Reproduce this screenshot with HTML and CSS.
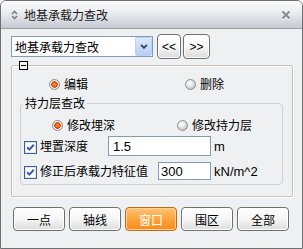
FILE: index.html
```html
<!DOCTYPE html>
<html lang="zh-CN">
<head>
<meta charset="utf-8">
<title>地基承载力查改</title>
<link rel="stylesheet" href="styles.css">
</head>
<body>
<div class="window">
  <div class="titlebar">
    <svg class="ticon" viewBox="0 0 7 10" width="7" height="10"><path d="M1 4 L3.5 1.5 L6 4" fill="none" stroke="#7a7d82" stroke-width="1.6"/><path d="M1 6 L3.5 8.5 L6 6" fill="none" stroke="#7a7d82" stroke-width="1.6"/></svg>
    <span class="title">地基承载力查改</span>
    <svg class="close" viewBox="0 0 10 10" width="10" height="10"><path d="M1.5 2.5 L8.5 9.5 M8.5 2.5 L1.5 9.5" stroke="#ffffff" stroke-width="2.2"/><path d="M1.5 1.5 L8.5 8.5 M8.5 1.5 L1.5 8.5" stroke="#8b8d91" stroke-width="2.2"/></svg>
  </div>
  <div class="content">
    <div class="toprow">
      <div class="select">
        <span class="seltext">地基承载力查改</span>
        <span class="arrow"><svg viewBox="0 0 8 5" width="8" height="5"><path d="M1 0.8 L4 3.8 L7 0.8" fill="none" stroke="#2c3e62" stroke-width="1.8"/></svg></span>
      </div>
      <button class="btn prev">&lt;&lt;</button>
      <button class="btn next">&gt;&gt;</button>
    </div>
    <fieldset class="group">
      <legend class="collapse"><span class="minus"></span></legend>
      <div class="radiorow">
        <label class="radio on first"><i></i>编辑</label>
        <label class="radio"><i></i>删除</label>
      </div>
      <fieldset class="sub">
        <legend class="sublegend">持力层查改</legend>
        <div class="radiorow2">
          <label class="radio on first"><i></i>修改埋深</label>
          <label class="radio"><i></i>修改持力层</label>
        </div>
        <div class="checkrow row1">
          <svg class="check" viewBox="0 0 13 13" width="13" height="13"><rect x="0.5" y="0.5" width="12" height="12" fill="#ffffff" stroke="#3d5f95"/><rect x="1.5" y="1.5" width="10" height="10" fill="none" stroke="#dfe6f2"/><path d="M3.2 6.2 L5.4 8.6 L9.8 3.8" fill="none" stroke="#3c58b4" stroke-width="2"/></svg>
          <span class="clabel">埋置深度</span>
          <input class="inp wide" type="text" value="1.5">
          <span class="unit">m</span>
        </div>
        <div class="checkrow row2">
          <svg class="check" viewBox="0 0 13 13" width="13" height="13"><rect x="0.5" y="0.5" width="12" height="12" fill="#ffffff" stroke="#3d5f95"/><rect x="1.5" y="1.5" width="10" height="10" fill="none" stroke="#dfe6f2"/><path d="M3.2 6.2 L5.4 8.6 L9.8 3.8" fill="none" stroke="#3c58b4" stroke-width="2"/></svg>
          <span class="clabel">修正后承载力特征值</span>
          <input class="inp narrow" type="text" value="300">
          <span class="unit">kN/m^2</span>
        </div>
      </fieldset>
    </fieldset>
    <div class="buttons">
      <button class="btn big">一点</button>
      <button class="btn big">轴线</button>
      <button class="btn big active">窗口</button>
      <button class="btn big">围区</button>
      <button class="btn big">全部</button>
    </div>
  </div>
</div>
</body>
</html>
```
FILE: styles.css
```css
* { box-sizing: border-box; }
html, body { margin: 0; padding: 0; }
body {
  width: 303px;
  height: 249px;
  overflow: hidden;
  background: #ffffff;
  font-family: "Noto Sans CJK SC", "Liberation Sans", sans-serif;
  font-size: 12px;
  color: #000;
}
.window {
  width: 303px;
  height: 249px;
  border: 1px solid #6d6f73;
  border-radius: 6px 6px 0 0;
  background: #eff0f2;
  overflow: hidden;
  display: flex;
  flex-direction: column;
}
.titlebar {
  flex: none;
  height: 28px;
  display: flex;
  align-items: center;
  padding-left: 10px;
  background: linear-gradient(#fbfbfc, #eceef1 40%, #c6cad1);
  border-bottom: 1px solid #9a9ea5;
}
.ticon { flex: none; margin-right: 6px; }
.title { flex: 1; font-size: 12px; line-height: 14px; color: #1b1b1b; }
.close { flex: none; margin-right: 11px; margin-top: 1px; }

.content { flex: 1; padding: 5px 9px 0 10px; }

.toprow {
  display: flex;
  align-items: center;
  height: 25px;
}
.select {
  width: 142px;
  height: 21px;
  border: 1px solid #7f9db9;
  background: #ffffff;
  display: flex;
  align-items: stretch;
  padding-left: 3px;
  margin-right: 4px;
}
.seltext { flex: 1; line-height: 19px; }
.arrow {
  width: 17px;
  border: 1px solid #bcd1f0;
  border-radius: 2px;
  background: linear-gradient(#dbe8fc, #b5cff5);
  display: flex;
  align-items: center;
  justify-content: center;
}
.arrow svg { display: block; }

.btn {
  font-family: "Liberation Sans", "Noto Sans CJK SC", sans-serif;
  font-size: 12px;
  color: #000;
  height: 25px;
  padding: 0;
  border: 1px solid #6f7072;
  border-radius: 4px;
  background: linear-gradient(#ffffff, #f6f6f6 50%, #dcdcdc);
  box-shadow: inset 0 0 0 1px #ffffff;
}
.prev { width: 24px; margin-right: 2px; }
.next { width: 27px; }

.group {
  margin: 2px 0 0 0;
  padding: 0;
  min-width: 0;
  border: 1px solid #c6c3b3;
  border-radius: 2px;
  box-shadow: 1px 1px 0 #ffffff, inset 1px 1px 0 #ffffff;
}
.collapse {
  padding: 0;
  margin-left: 7px;
  height: 9px;
}
.minus {
  display: block;
  width: 9px;
  height: 9px;
  border: 1px solid #000;
  background: linear-gradient(#000, #000) center / 5px 1px no-repeat, #f6f6f6;
}

.radiorow {
  display: flex;
  align-items: center;
  height: 18px;
  margin-top: 5px;
  padding-left: 37px;
}
.radio {
  display: flex;
  align-items: center;
  gap: 4px;
  line-height: 14px;
}
.radiorow .first { width: 136px; }
.radio i {
  display: block;
  width: 11px;
  height: 11px;
  border-radius: 50%;
  border: 1px solid #8e8e8e;
  background: radial-gradient(circle at 40% 35%, #ffffff 0, #ececec 35%, #a9a9a9 100%);
}
.radio.on i {
  background: radial-gradient(circle at 50% 50%, #ff9a50 0, #f0641a 1.8px, #d24a06 3px, #f2f2f2 3.6px, #d0d0d0 100%);
}

.sub {
  margin: 3px 9px 11px 8px;
  padding: 0 0 3px 0;
  min-width: 0;
  border: 1px solid #cfd0d3;
  border-radius: 4px;
}
.sublegend {
  padding: 0 2px;
  margin-left: 2px;
  line-height: 14px;
}
.radiorow2 {
  display: flex;
  align-items: center;
  height: 18px;
  margin-top: 6px;
  padding-left: 31px;
}
.radiorow2 .first { width: 125px; }

.checkrow {
  display: flex;
  align-items: center;
  height: 20px;
  padding-left: 3px;
}
.row1 { margin-top: 2px; }
.row2 { margin-top: 5px; }
.check { flex: none; display: block; margin-right: 3px; margin-top: 2px; }
.clabel { flex: 1; line-height: 14px; }
.inp {
  font-family: "Liberation Sans", sans-serif;
  font-size: 13px;
  color: #000;
  border: 1px solid #7f9db9;
  background: #ffffff;
  outline: none;
  margin: 0;
}
.wide { width: 103px; height: 20px; padding: 0 0 0 4px; }
.narrow { width: 53px; height: 18px; padding: 0 0 0 2px; }
.unit {
  width: 71px;
  padding-left: 3px;
  font-family: "Liberation Sans", sans-serif;
  font-size: 13px;
}

.buttons {
  display: flex;
  gap: 4px;
  margin-top: 10px;
  padding-left: 2px;
}
.big { width: 52px; height: 24px; }
.active {
  color: #ffffff;
  border-color: #b86c1c;
  background: linear-gradient(#ffc477, #ffa33c 50%, #f88a18);
  box-shadow: inset 0 0 0 1px #ffd49a;
}
```
